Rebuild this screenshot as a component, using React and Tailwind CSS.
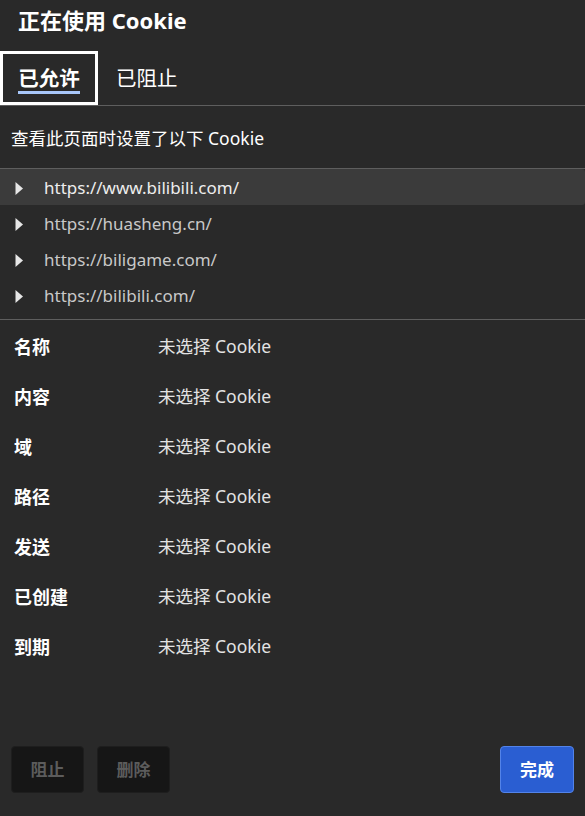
import { useState } from "react";

const sites = [
    "https://www.bilibili.com/",
    "https://huasheng.cn/",
    "https://biligame.com/",
    "https://bilibili.com/",
];

const fields = ["名称", "内容", "域", "路径", "发送", "已创建", "到期"];

function Caret() {
    return (
        <svg width="9" height="15" viewBox="0 0 9 15" className="shrink-0">
            <path d="M0.5 1 L8 7.5 L0.5 14 Z" fill="#e6e6e6" />
        </svg>
    );
}

export default function App() {
    const [tab, setTab] = useState("allowed");
    const [selected, setSelected] = useState(0);

    return (
        <div
            className="w-[585px] h-[816px] bg-[#292929] text-[#e3e3e3] flex flex-col overflow-hidden"
            style={{ fontFamily: '"Noto Sans", "Noto Sans CJK SC", sans-serif' }}
        >
            {/* Header */}
            <h1 className="px-[18px] pt-[5px] h-[51px] text-[22px] font-bold text-white leading-[30px]">
                正在使用 Cookie
            </h1>

            {/* Tabs */}
            <div className="flex items-stretch h-[55px] border-b border-[#5e5e5e]">
                <button
                    onClick={() => setTab("allowed")}
                    className="w-[98px] border-[3px] border-white flex items-center justify-center pt-[3px]"
                >
                    <span className="text-[20.5px] font-bold text-white leading-[26px] border-b-[3px] border-[#a8c7fa]">
                        已允许
                    </span>
                </button>
                <button
                    onClick={() => setTab("blocked")}
                    className="px-[18px] flex items-center text-[20.5px] text-white leading-[26px] pb-[1px]"
                >
                    已阻止
                </button>
            </div>

            {/* Description */}
            <div className="h-[63px] px-[11px] flex items-center text-[17.5px] text-white border-b border-[#5e5e5e] pt-[3px]">
                查看此页面时设置了以下 Cookie
            </div>

            {/* Site list */}
            <div className="pb-[6px] border-b border-[#5e5e5e]">
                {sites.map((site, i) => (
                    <div
                        key={site}
                        onClick={() => setSelected(i)}
                        className={`h-[36px] flex items-center pl-[15px] gap-[20px] text-[17px] rounded-r-[3px] pt-[2px] ${
                            selected === i ? "bg-[#3b3b3b] text-[#ededed]" : "text-[#c8c8c8]"
                        }`}
                    >
                        <Caret />
                        <span>{site}</span>
                    </div>
                ))}
            </div>

            {/* Detail table */}
            <div className="pt-[1px] flex-1">
                {fields.map((f) => (
                    <div key={f} className="h-[50px] flex items-center px-[14px] text-[17.5px]">
                        <span className="w-[144px] font-bold text-white text-[18px] mt-[2px]">{f}</span>
                        <span className="text-[#e3e3e3]">未选择 Cookie</span>
                    </div>
                ))}
            </div>

            {/* Footer buttons */}
            <div className="flex items-center justify-between px-[11px] pb-[23px]">
                <div className="flex gap-[13px]">
                    <button className="w-[73px] h-[47px] rounded-[4px] bg-[#161616] border border-[#1e1e1e] text-[#5c5c5c] text-[17px] font-bold">
                        阻止
                    </button>
                    <button className="w-[73px] h-[47px] rounded-[4px] bg-[#161616] border border-[#1e1e1e] text-[#5c5c5c] text-[17px] font-bold">
                        删除
                    </button>
                </div>
                <button className="w-[74px] h-[47px] rounded-[4px] bg-[#2a5ed2] border border-[#5383e8] text-white text-[17px] font-bold">
                    完成
                </button>
            </div>
        </div>
    );
}
